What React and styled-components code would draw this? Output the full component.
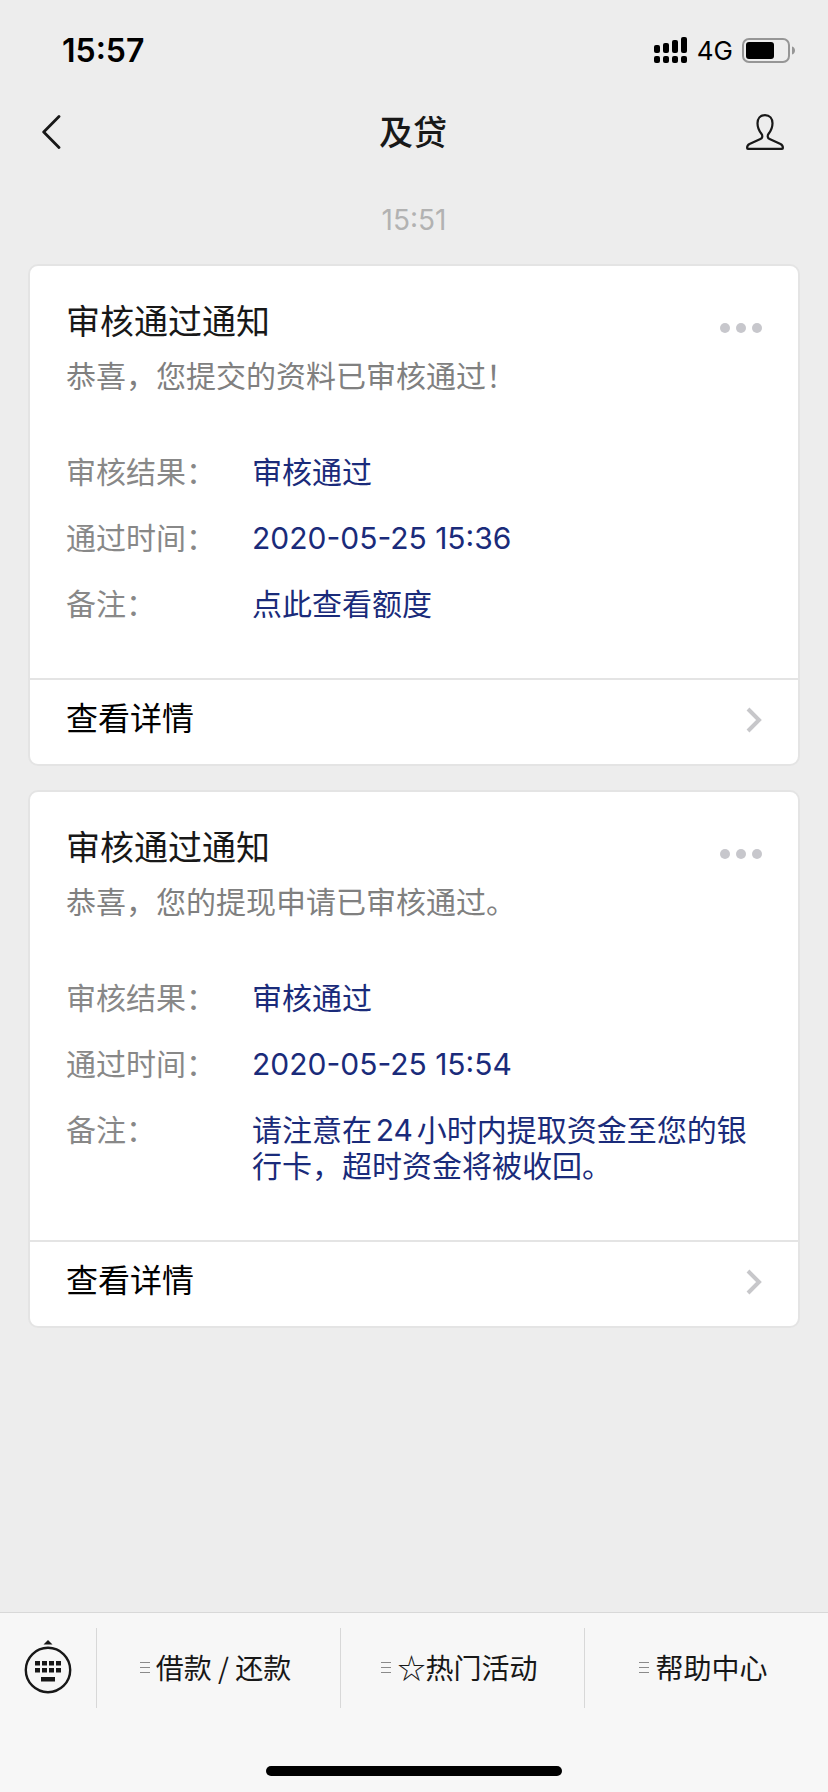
import React from 'react'
import styled, { createGlobalStyle } from 'styled-components'

const messages = [
    {
        id: 1,
        title: '审核通过通知',
        text: '恭喜，您提交的资料已审核通过！',
        fields: [
            ['审核结果：', '审核通过'],
            ['通过时间：', '2020-05-25 15:36'],
            ['备注：', '点此查看额度'],
        ],
    },
    {
        id: 2,
        title: '审核通过通知',
        text: '恭喜，您的提现申请已审核通过。',
        fields: [
            ['审核结果：', '审核通过'],
            ['通过时间：', '2020-05-25 15:54'],
            ['备注：', '请注意在24小时内提取资金至您的银行卡，超时资金将被收回。'],
        ],
    },
]

const menus = ['借款 / 还款', '☆热门活动', '帮助中心']

function StatusBar() {
    return (
        <Status>
            <Clock>15:57</Clock>
            <StatusRight>
                <svg width="34" height="27" viewBox="0 0 34 27">
                    <rect x="0" y="8" width="6" height="8" rx="2" />
                    <rect x="9" y="6" width="6" height="10" rx="2" />
                    <rect x="18" y="3" width="6" height="13" rx="2" />
                    <rect x="27" y="0" width="6" height="16" rx="2" />
                    <rect x="0" y="19" width="6" height="7" rx="2" />
                    <rect x="9" y="19" width="6" height="7" rx="2" />
                    <rect x="18" y="19" width="6" height="7" rx="2" />
                    <rect x="27" y="19" width="6" height="7" rx="2" />
                </svg>
                <Network>4G</Network>
                <svg width="54" height="25" viewBox="0 0 54 25">
                    <rect x="1" y="1" width="46" height="23" rx="6" fill="none" stroke="#969696" strokeWidth="2" />
                    <rect x="4" y="4" width="28" height="17" rx="3" />
                    <path d="M50 8.5c4 1 4 7 0 8z" fill="#969696" />
                </svg>
            </StatusRight>
        </Status>
    )
}

function Message({ title, text, fields }) {
    return (
        <Card>
            <CardBody>
                <CardHead>
                    <h2>{title}</h2>
                    <MoreButton aria-label="更多">
                        <svg width="42" height="10" viewBox="0 0 42 10" fill="#c7c7cc">
                            <circle cx="5" cy="5" r="5" />
                            <circle cx="21" cy="5" r="5" />
                            <circle cx="37" cy="5" r="5" />
                        </svg>
                    </MoreButton>
                </CardHead>
                <CardText>{text}</CardText>
                <Fields>
                    {fields.map(([label, value]) => (
                        <Field key={label}>
                            <dt>{label}</dt>
                            <dd>{value}</dd>
                        </Field>
                    ))}
                </Fields>
            </CardBody>
            <CardLink href="#">
                <span>查看详情</span>
                <svg width="16" height="26" viewBox="0 0 16 26" fill="none" stroke="#c7c7ca" strokeWidth="4">
                    <path d="M2 2 13 13 2 24" />
                </svg>
            </CardLink>
        </Card>
    )
}

function App() {
    return (
        <Page>
            <GlobalStyle />
            <StatusBar />
            <Header>
                <IconButton aria-label="返回">
                    <svg width="20" height="36" viewBox="0 0 20 36" fill="none" stroke="#181818" strokeWidth="2.8" strokeLinecap="round" strokeLinejoin="round">
                        <path d="M17 2.500 1.700 18 17 33.500" />
                    </svg>
                </IconButton>
                <h1>及贷</h1>
                <IconButton aria-label="资料">
                    <svg width="38" height="36" viewBox="0 0 38 36" fill="none" stroke="#181818" strokeWidth="2.200" strokeLinejoin="round">
                        <path d="M19 1.100c-4.800 0-7.500 3.500-7.500 8.200 0 4.700 1.700 7.700 3.900 10.500 1.400 1.800 1.200 4.300-1 5.300L3.500 30.100C1.800 30.900 1.100 32 1.100 34c0 .6.3.9.9.9h34c.6 0 .9-.3.9-.9 0-2-.7-3.100-2.400-3.900l-10.900-5c-2.200-1-2.400-3.500-1-5.300 2.200-2.800 3.900-5.800 3.900-10.500 0-4.700-2.700-8.200-7.500-8.200z" />
                    </svg>
                </IconButton>
            </Header>
            <Chat>
                <Time>15:51</Time>
                {messages.map((m) => (
                    <Message key={m.id} title={m.title} text={m.text} fields={m.fields} />
                ))}
            </Chat>
            <Footer>
                <MenuBar>
                    <KeyboardButton aria-label="键盘">
                        <svg width="48" height="54" viewBox="0 0 48 54" fill="#181818">
                            <path d="M24 0 28.500 4.500h-9z" />
                            <circle cx="24" cy="30" r="22.200" fill="none" stroke="#181818" strokeWidth="2.400" />
                            <path d="M11 21h5v4.500h-5zM18 21h5v4.500h-5zM25 21h5v4.500h-5zM32 21h5v4.500h-5zM11 28h5v4.500h-5zM18 28h5v4.500h-5zM25 28h5v4.500h-5zM32 28h5v4.500h-5zM17 37h14v4.500H17z" />
                        </svg>
                    </KeyboardButton>
                    {menus.map((name) => (
                        <MenuButton key={name}>
                            <svg width="10" height="12" viewBox="0 0 10 12" stroke="#8a8a8a">
                                <path d="M0 1.500h10M0 6.500h10M0 11.500h10" />
                            </svg>
                            {name}
                        </MenuButton>
                    ))}
                </MenuBar>
                <HomeIndicator />
            </Footer>
        </Page>
    )
}

export default App

const GlobalStyle = createGlobalStyle`
   * {
       box-sizing: border-box;
   }

   body, h1, h2, p, dl, dd {
       margin: 0;
   }

   body {
       background: #ededed;
       color: #181818;
       font-family: Inter, "Noto Sans CJK SC", sans-serif;
   }

   svg {
       display: block;
       flex-shrink: 0;
   }

   button {
       padding: 0;
       border: 0;
       background: none;
       color: inherit;
       font-family: inherit;
       cursor: pointer;
   }
`;

const Page = styled.div`
   display: flex;
   flex-direction: column;
   min-height: 100vh;
`;

const Status = styled.div`
   display: flex;
   align-items: center;
   justify-content: space-between;
   height: 88px;
   padding: 12px 32px 0 62px;
   color: #000;
`;

const Clock = styled.span`
   font-size: 32px;
   font-weight: 600;
`;

const StatusRight = styled.div`
   display: flex;
   align-items: center;
   gap: 9px;
`;

const Network = styled.span`
   font-size: 26px;
`;

const Header = styled.header`
   display: flex;
   align-items: center;
   justify-content: space-between;
   height: 88px;
   padding: 0 44px 0 42px;

   > h1 {
       padding-bottom: 4px;
       font-size: 34px;
       font-weight: 500;
   }
`;

const IconButton = styled.button`
   display: flex;
   flex: 0 0 40px;

   &:last-child {
       justify-content: flex-end;
   }
`;

const Chat = styled.main`
   display: flex;
   flex: 1;
   flex-direction: column;
   gap: 24px;
   padding: 24px 28px;
`;

const Time = styled.time`
   color: #b2b2b2;
   font-size: 28px;
   line-height: 40px;
   text-align: center;
`;

const Card = styled.section`
   border: 2px solid #e4e4e4;
   border-radius: 10px;
   background: #fff;
`;

const CardBody = styled.div`
   padding: 32px 36px 56px;
`;

const CardHead = styled.div`
   display: flex;
   align-items: center;
   justify-content: space-between;

   > h2 {
       font-size: 34px;
       font-weight: 400;
       line-height: 48px;
   }
`;

const MoreButton = styled.button`
   padding-top: 12px;
`;

const CardText = styled.p`
   margin-top: 12px;
   color: #808080;
   font-size: 30px;
   line-height: 36px;
`;

const Fields = styled.dl`
   display: flex;
   flex-direction: column;
   gap: 30px;
   margin-top: 60px;
   font-size: 30px;
   line-height: 36px;
`;

const Field = styled.div`
   display: flex;

   > dt {
       flex: 0 0 186px;
       color: #888;
   }

   > dd {
       flex: 1;
       color: #1a2b7a;
       text-autospace: normal;
   }
`;

const CardLink = styled.a`
   display: flex;
   align-items: center;
   justify-content: space-between;
   height: 86px;
   padding: 0 36px 4px;
   border-top: 2px solid #e4e4e4;
   color: #000;
   font-size: 32px;
   text-decoration: none;

   > span {
       padding-bottom: 8px;
   }
`;

const Footer = styled.footer`
   padding-bottom: 16px;
   border-top: 1px solid #d8d8d8;
   background: #f7f7f7;
`;

const MenuBar = styled.nav`
   display: flex;
   height: 110px;
   padding: 15px 0;
`;

const KeyboardButton = styled.button`
   display: flex;
   flex: 0 0 96px;
   align-items: center;
   justify-content: center;
   padding-bottom: 2px;
`;

const MenuButton = styled.button`
   display: flex;
   flex: 1;
   align-items: center;
   justify-content: center;
   gap: 6px;
   padding: 0 6px 2px 0;
   border-left: 1px solid #d8d8d8;
   font-family: "Noto Sans CJK SC", sans-serif;
   font-size: 28px;
`;

const HomeIndicator = styled.div`
   width: 296px;
   height: 10px;
   margin: 43px auto 0;
   border-radius: 5px;
   background: #000;
`;
